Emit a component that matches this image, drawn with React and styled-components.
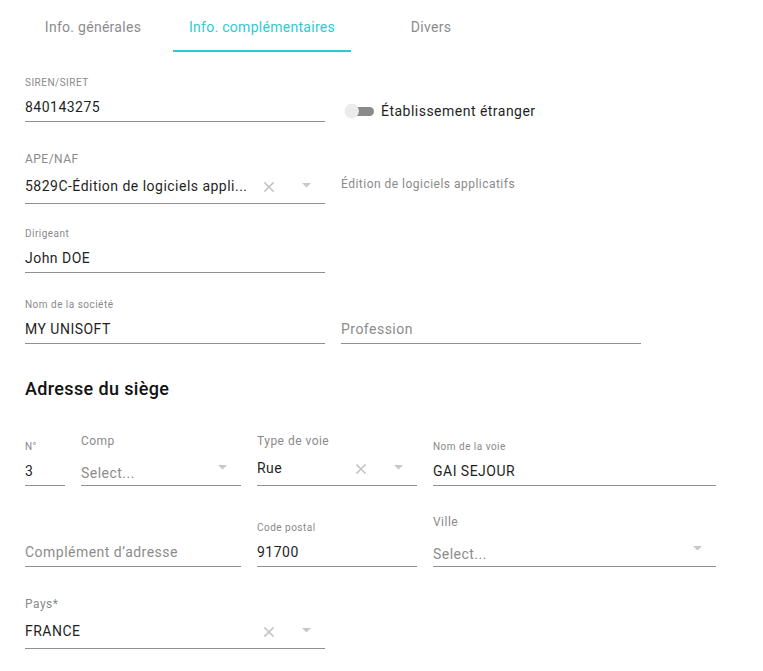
import React from "react";
import styled, { createGlobalStyle } from "styled-components";

const GlobalStyle = createGlobalStyle`
  body {
    margin: 0;
    background: #fff;
    font-family: Roboto, "Liberation Sans", sans-serif;
    letter-spacing: 0.03em;
  }
`;

const ClearIcon = () => (
  <svg width="10" height="10" viewBox="0 0 10 10">
    <path d="M1 1L9 9M9 1L1 9" stroke="#c4c4c4" strokeWidth="1.6" strokeLinecap="square" />
  </svg>
);

const ArrowIcon = () => (
  <svg width="9" height="5" viewBox="0 0 9 5">
    <path d="M0 0H9L4.5 4.5Z" fill="#c8c8c8" />
  </svg>
);

const TextField = ({ label, value, placeholder, width }) => (
  <StyledField $w={width}>
    {label && <StyledSmallLabel>{label}</StyledSmallLabel>}
    <StyledControl>
      {value ? <StyledValue>{value}</StyledValue> : <StyledPlaceholder>{placeholder}</StyledPlaceholder>}
    </StyledControl>
  </StyledField>
);

const SelectField = ({ label, value, width, clearable }) => (
  <StyledField $w={width}>
    <StyledSelectLabel>{label}</StyledSelectLabel>
    <StyledSelectControl>
      {value ? (
        <StyledValue>{value}</StyledValue>
      ) : (
        <StyledPlaceholder $low>Select...</StyledPlaceholder>
      )}
      {clearable && (
        <StyledClear>
          <ClearIcon />
        </StyledClear>
      )}
      <StyledArrow>
        <ArrowIcon />
      </StyledArrow>
    </StyledSelectControl>
  </StyledField>
);

export default function App() {
  return (
    <>
      <GlobalStyle />
      <StyledPage>
        <StyledTabs>
          <StyledTab>Info. générales</StyledTab>
          <StyledTab $active>Info. complémentaires</StyledTab>
          <StyledTab>Divers</StyledTab>
        </StyledTabs>

        <StyledForm>
          <StyledRow $mt={25}>
            <TextField label="SIREN/SIRET" value="840143275" width={300} />
            <StyledSwitchWrapper>
              <StyledSwitch>
                <StyledThumb />
              </StyledSwitch>
              <StyledSwitchLabel>Établissement étranger</StyledSwitchLabel>
            </StyledSwitchWrapper>
          </StyledRow>

          <StyledRow $mt={30}>
            <SelectField
              label="APE/NAF"
              value="5829C-Édition de logiciels appli..."
              width={300}
              clearable
            />
            <StyledHint>Édition de logiciels applicatifs</StyledHint>
          </StyledRow>

          <StyledRow $mt={24}>
            <TextField label="Dirigeant" value="John DOE" width={300} />
          </StyledRow>

          <StyledRow $mt={26}>
            <TextField label="Nom de la société" value="MY UNISOFT" width={300} />
            <TextField placeholder="Profession" width={300} />
          </StyledRow>

          <StyledHeading>Adresse du siège</StyledHeading>

          <StyledRow $mt={33}>
            <TextField label="N°" value="3" width={40} />
            <SelectField label="Comp" width={160} />
            <SelectField label="Type de voie" value="Rue" width={160} clearable />
            <TextField label="Nom de la voie" value="GAI SEJOUR" width={283} />
          </StyledRow>

          <StyledRow $mt={29}>
            <TextField placeholder="Complément d’adresse" width={216} />
            <TextField label="Code postal" value="91700" width={160} />
            <SelectField label="Ville" width={283} />
          </StyledRow>

          <StyledRow $mt={30}>
            <SelectField label="Pays*" value="FRANCE" width={300} clearable />
          </StyledRow>
        </StyledForm>
      </StyledPage>
    </>
  );
}

const StyledPage = styled.div`
  width: 763px;
  height: 671px;
  overflow: hidden;
  background: #fff;
`;

const StyledTabs = styled.div`
  display: flex;
  padding-left: 13px;
  height: 52px;
`;

const StyledTab = styled.div`
  min-width: 160px;
  padding: 6px 16px 2px;
  box-sizing: border-box;
  display: flex;
  align-items: center;
  justify-content: center;
  font-size: 14px;
  letter-spacing: 0.02em;
  color: ${({ $active }) => ($active ? "#2ccbd2" : "#8c8c8c")};
  border-bottom: 2px solid ${({ $active }) => ($active ? "#2ccbd2" : "transparent")};
`;

const StyledForm = styled.div`
  padding-left: 25px;
  display: flex;
  flex-direction: column;
`;

const StyledRow = styled.div`
  display: flex;
  align-items: flex-end;
  gap: 16px;
  margin-top: ${({ $mt }) => $mt}px;
`;

const StyledField = styled.div`
  width: ${({ $w }) => $w}px;
  display: flex;
  flex-direction: column;
  flex-shrink: 0;
`;

const StyledSmallLabel = styled.label`
  font-size: 10px;
  line-height: 12px;
  color: #8a8a8a;
  margin-bottom: 3px;
`;

const StyledSelectLabel = styled.label`
  font-size: 12px;
  line-height: 14px;
  color: #8a8a8a;
  margin-bottom: 8px;
`;

const StyledControl = styled.div`
  height: 30px;
  box-sizing: border-box;
  border-bottom: 1px solid #8f8f8f;
  display: flex;
  align-items: center;
`;

const StyledSelectControl = styled(StyledControl)`
  padding-bottom: 6px;
  padding-right: 14px;
`;

const StyledValue = styled.span`
  flex: 1;
  font-size: 14px;
  color: #1f1f1f;
  white-space: nowrap;
  overflow: hidden;
`;

const StyledPlaceholder = styled.span`
  flex: 1;
  font-size: 14px;
  color: #8c8c8c;
  white-space: nowrap;
  position: relative;
  top: ${({ $low }) => ($low ? "5px" : "0")};
`;

const StyledClear = styled.span`
  display: flex;
  margin-right: 28px;
  position: relative;
  top: 1px;
`;

const StyledArrow = styled.span`
  display: flex;
`;

const StyledSwitchWrapper = styled.div`
  display: flex;
  align-items: center;
  gap: 7px;
  margin-left: 4px;
  margin-bottom: 3px;
`;

const StyledSwitch = styled.span`
  position: relative;
  width: 29px;
  height: 14px;
  display: flex;
  align-items: center;
  &::before {
    content: "";
    position: absolute;
    left: 4px;
    right: 0;
    height: 9px;
    border-radius: 5px;
    background: #8a8a8a;
  }
`;

const StyledThumb = styled.span`
  position: relative;
  width: 14px;
  height: 14px;
  border-radius: 50%;
  background: #ececec;
  box-shadow: 0 0 1px rgba(0, 0, 0, 0.15);
`;

const StyledSwitchLabel = styled.span`
  font-size: 14px;
  color: #1f1f1f;
`;

const StyledHint = styled.span`
  font-size: 12px;
  color: #8a8a8a;
  margin-bottom: 13px;
`;

const StyledHeading = styled.h2`
  margin: 33px 0 0;
  font-size: 18px;
  line-height: 24px;
  font-weight: 500;
  letter-spacing: 0.02em;
  color: #111;
`;
